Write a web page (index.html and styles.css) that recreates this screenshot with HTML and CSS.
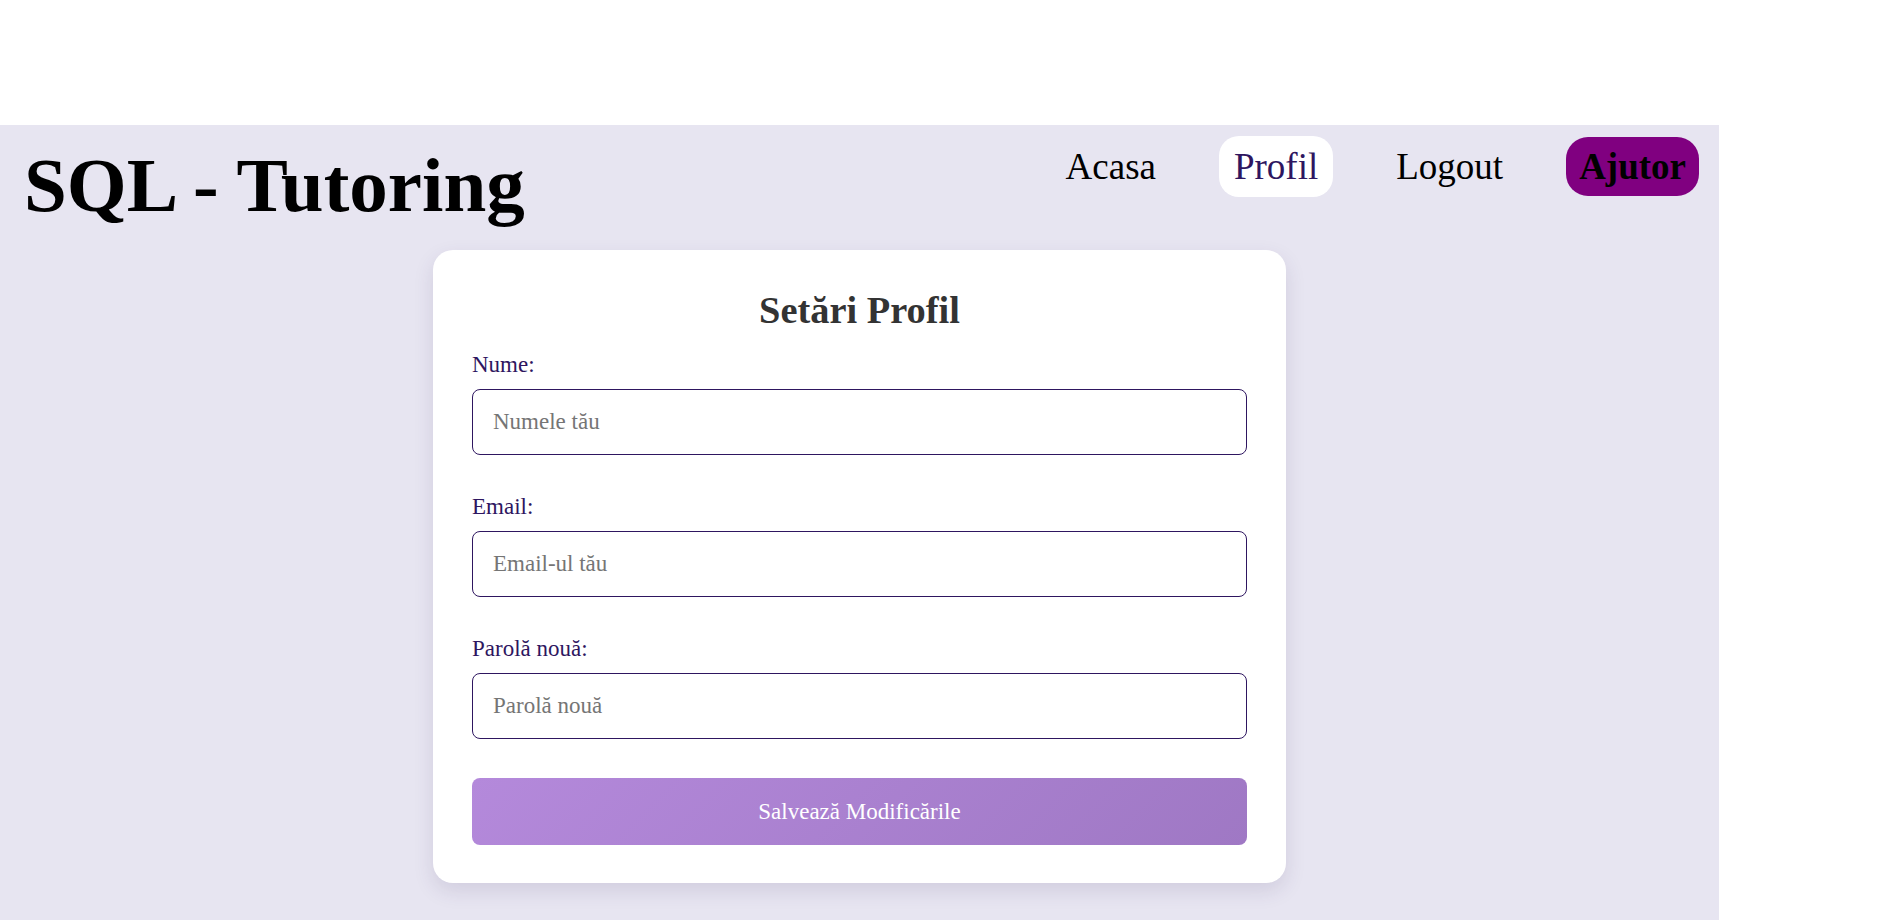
FILE: index.html
```html
<!DOCTYPE html>
<html lang="ro">
<head>
<meta charset="utf-8">
<title>SQL - Tutoring</title>
<link rel="stylesheet" href="styles.css">
</head>
<body>
<div class="page">
  <header class="header">
    <h1 class="brand">SQL - Tutoring</h1>
    <nav class="nav">
      <a class="nav-item" href="#">Acasa</a>
      <a class="nav-item active" href="#">Profil</a>
      <a class="nav-item" href="#">Logout</a>
      <a class="nav-item help" href="#">Ajutor</a>
    </nav>
  </header>
  <main class="card">
    <h2 class="card-title">Setări Profil</h2>
    <form class="form">
      <div class="group">
        <label class="label" for="nume">Nume:</label>
        <input class="input" id="nume" type="text" placeholder="Numele tău">
      </div>
      <div class="group">
        <label class="label" for="email">Email:</label>
        <input class="input" id="email" type="email" placeholder="Email-ul tău">
      </div>
      <div class="group">
        <label class="label" for="parola">Parolă nouă:</label>
        <input class="input" id="parola" type="password" placeholder="Parolă nouă">
      </div>
      <button class="btn" type="button">Salvează Modificările</button>
    </form>
  </main>
</div>
</body>
</html>
```
FILE: styles.css
```css
html, body {
  margin: 0;
  padding: 0;
  background: #ffffff;
  font-family: "Liberation Serif", "Times New Roman", serif;
  overflow: hidden;
}

.page {
  margin-top: 125px;
  width: 1719px;
  height: 795px;
  background: #e7e5f1;
  box-sizing: border-box;
}

.header {
  display: flex;
  justify-content: space-between;
  align-items: flex-start;
  padding: 11px 20px 0 24px;
  height: 114px;
  box-sizing: border-box;
}

.brand {
  margin: 5px 0 0;
  font-size: 77px;
  font-weight: bold;
  line-height: normal;
  color: #000;
}

.nav {
  display: flex;
  align-items: center;
  gap: 48px;
}

.nav-item {
  font-size: 37px;
  line-height: normal;
  color: #000;
  text-decoration: none;
  padding: 9px 15px;
  border-radius: 20px;
}

.nav-item.active {
  background: #ffffff;
  color: #2e1660;
}

.nav-item.help {
  background: #800080;
  color: #000;
  font-weight: bold;
  padding: 8px 13px;
  border-radius: 22px;
}

.card {
  width: 853px;
  margin: 11px auto 0;
  background: #ffffff;
  border-radius: 20px;
  padding: 38px 39px 38px;
  box-sizing: border-box;
  box-shadow: 0 8px 20px rgba(60, 50, 100, 0.13);
}

.card-title {
  margin: 0 0 20px;
  text-align: center;
  font-size: 38.4px;
  font-weight: bold;
  line-height: normal;
  color: #333333;
}

.form {
  display: flex;
  flex-direction: column;
}

.group {
  display: flex;
  flex-direction: column;
  margin-bottom: 39px;
}

.label {
  font-size: 23px;
  line-height: normal;
  color: #2e1660;
  margin-bottom: 11px;
}

.input {
  font-family: "Liberation Serif", "Times New Roman", serif;
  font-size: 23px;
  line-height: normal;
  padding: 19px 20px;
  border: 1px solid #2e1660;
  border-radius: 8px;
  background: #fff;
  color: #000;
  outline: none;
}

.input::placeholder {
  color: #757575;
}

.btn {
  font-family: "Liberation Serif", "Times New Roman", serif;
  font-size: 23px;
  line-height: normal;
  color: #ffffff;
  border: none;
  border-radius: 8px;
  padding: 20.5px 0;
  background: linear-gradient(135deg, #b489db 0%, #9f78c4 100%);
  cursor: pointer;
}
```
